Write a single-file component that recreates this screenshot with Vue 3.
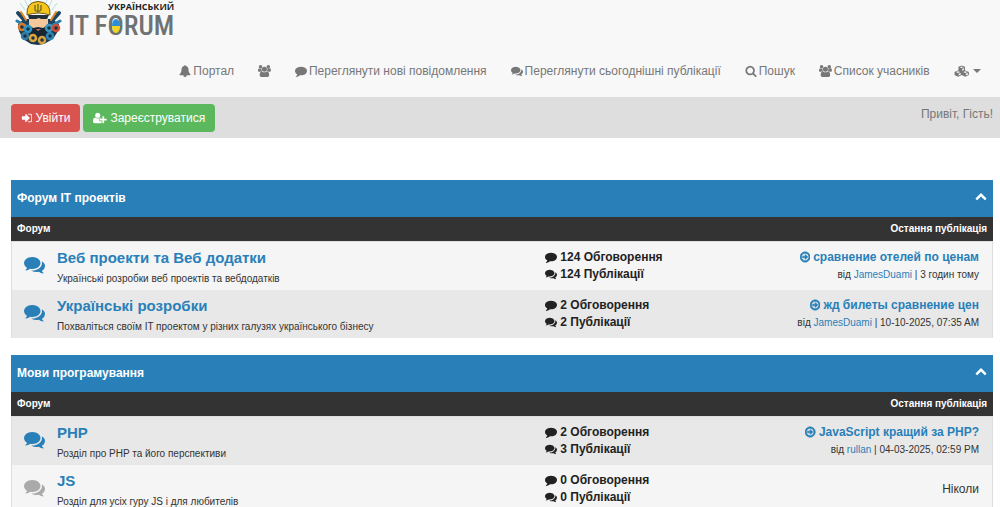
<template>
  <div class="forum-page">
    <header class="navbar">
      <a class="brand" href="#">
        <svg class="emblem" viewBox="0 0 48 46" aria-hidden="true">
          <g stroke="#b5e0dc" stroke-width="1">
            <path d="M11 10L6 3M14 7L11 0M35 7L38 0M38 10L43 3M18 4L16 0M31 4L33 0" />
          </g>
          <path d="M4 24L10 19H38L45 24L44 31L39 39L30 44L24 45L17 44L9 39L5 31Z" fill="#1b3a52" />
          <g stroke="#1d4562" stroke-width="4" stroke-linecap="round">
            <path d="M13 23L4 13M36 23L45 13" />
            <path d="M12 26L3 21M37 26L46 21" stroke="#2a7fa9" stroke-width="3" />
            <path d="M12 20L7 12M37 20L42 12" stroke="#e08a2a" stroke-width="2" />
          </g>
          <path d="M15 16h19v11q-2 4-5 3l-5-2-5 2q-3 0-4-4z" fill="#f5c79c" />
          <path d="M14 15h21l-2 4h-6l-2-1-3 1h-7z" fill="#22303a" />
          <path d="M15 25l4 3 5-1 5 1 5-3v8l-9 6-10-6z" fill="#172633" />
          <path d="M22 29h5l-3 2z" fill="#cf705a" />
          <path d="M13 15Q12 2 24 1.500Q37 2 36 15Q24 11 13 15Z" fill="#f6c51c" stroke="#6b5b1c" stroke-width="1" />
          <path d="M21 5v5q3 3 6 0V5M24 4v9" fill="none" stroke="#7b7420" stroke-width="1.500" />
          <g fill="#173247" stroke-width="2.500">
            <circle cx="8" cy="27" r="3" stroke="#d9792e" />
            <circle cx="14" cy="29" r="3" stroke="#2b96c5" />
            <circle cx="11" cy="36" r="3" stroke="#347b9d" />
            <circle cx="19" cy="38" r="3" stroke="#dba63a" />
            <circle cx="28" cy="40" r="3" stroke="#d7a13d" />
            <circle cx="36" cy="36" r="3" stroke="#2b86b5" />
            <circle cx="35" cy="28" r="3" stroke="#3b96bb" />
            <circle cx="42" cy="28" r="3" stroke="#cb4f39" />
          </g>
        </svg>
        <span class="wordmark">
          <span class="wordmark-top">УКРАЇНСЬКИЙ</span>
          <span class="wordmark-main">IT F<span class="flag-letter">O</span>RUM</span>
        </span>
      </a>

      <nav class="nav-links">
        <a v-for="link in navLinks" :key="link.id" class="nav-link" href="#" :aria-label="link.id">
          <FaIcon :name="link.icon" />
          <span v-if="link.text">{{ link.text }}</span>
        </a>
        <button class="nav-link" type="button" aria-label="more">
          <FaIcon name="cubes" />
          <span class="caret"></span>
        </button>
      </nav>
    </header>

    <!-- User panel -->
    <div class="user-panel">
      <div class="user-actions">
        <button class="btn btn-danger" type="button"><FaIcon name="signIn" /> Увійти</button>
        <button class="btn btn-success" type="button"><FaIcon name="userPlus" /> Зареєструватися</button>
      </div>
      <span class="greeting">Привіт, Гість!</span>
    </div>

    <main class="content">
      <section v-for="(category, c) in categories" :key="category.title" class="category">
        <div class="category-head">
          <a href="#">{{ category.title }}</a>
          <button class="collapse-button" type="button" aria-label="toggle" @click="category.open = !category.open">
            <FaIcon name="chevronUp" />
          </button>
        </div>
        <table v-show="category.open" class="forum-table">
          <colgroup>
            <col class="col-status">
            <col>
            <col class="col-stats">
            <col class="col-last">
          </colgroup>
          <thead>
            <tr>
              <th colspan="3">Форум</th>
              <th class="last-head">Остання публікація</th>
            </tr>
          </thead>
          <tbody>
            <tr v-for="(forum, f) in category.forums" :key="forum.name" :class="{ alt: (c + f) % 2 === 1 }">
              <td class="status" :class="{ read: !forum.last }">
                <FaIcon name="comments" />
              </td>
              <td class="info">
                <a class="forum-name" href="#">{{ forum.name }}</a>
                <div class="forum-text">{{ forum.text }}</div>
              </td>
              <td class="stats">
                <div><FaIcon name="comment" /> {{ forum.threads }} Обговорення</div>
                <div><FaIcon name="comments" /> {{ forum.posts }} Публікації</div>
              </td>
              <td v-if="forum.last" class="last">
                <a class="last-title" href="#"><FaIcon name="arrowRight" /> {{ forum.last.title }}</a>
                <div class="last-meta">від <a href="#">{{ forum.last.user }}</a> | {{ forum.last.date }}</div>
              </td>
              <td v-else class="last never">Ніколи</td>
            </tr>
          </tbody>
        </table>
      </section>
    </main>
  </div>
</template>

<script setup>
import { h, ref } from 'vue'

// [width, path, left edge], all on a 1792 unit high grid
const icons = {
  bell: [1792, 'M912 1696q0-16-16-16-59 0-101.5-42.5t-42.5-101.5q0-16-16-16t-16 16q0 73 51.5 124.5t124.5 51.5q16 0 16-16zm816-288q0 52-38 90t-90 38h-448q0 106-75 181t-181 75-181-75-75-181h-448q-52 0-90-38t-38-90q50-42 91-88t85-119.5 74.5-158.5 50-206 19.5-260q0-152 117-282.5t307-158.5q-8-19-8-39 0-40 28-68t68-28 68 28 28 68q0 20-8 39 190 28 307 158.5t117 282.5q0 139 19.5 260t50 206 74.5 158.5 85 119.5 91 88z'],
  users: [1920, 'M529 896q-162 5-265 128h-134q-82 0-138-40.5t-56-118.5q0-353 124-353 6 0 43.5 21t97.5 42.5 119 21.5q67 0 133-23-5 37-5 66 0 159 90 293zm1071 637q0 120-73 189.5t-194 69.5h-874q-121 0-194-69.5t-73-189.5q0-53 3.5-103.5t14-109 26.5-108.5 43-97.5 62-81 85.5-53.5 111.5-20q10 0 43 21.5t73 48 107 48 135 21.5 135-21.5 107-48 73-48 43-21.5q61 0 111.5 20t85.5 53.5 62 81 43 97.5 26.5 108.5 14 109 3.5 103.5zm-1024-1277q0 106-75 181t-181 75-181-75-75-181 75-181 181-75 181 75 75 181zm704 384q0 159-112.5 271.5t-271.5 112.5-271.5-112.5-112.5-271.5 112.5-271.5 271.5-112.5 271.5 112.5 112.5 271.5zm576 225q0 78-56 118.5t-138 40.5h-134q-103-123-265-128 90-134 90-293 0-29-5-66 66 23 133 23 59 0 119-21.5t97.5-42.5 43.5-21q124 0 124 353zm-128-609q0 106-75 181t-181 75-181-75-75-181 75-181 181-75 181 75 75 181z', -64],
  comment: [1792, 'M1792 896q0 174-120 321.5t-326 233-450 85.5q-70 0-145-8-198 175-460 242-49 14-114 22h-5q-15 0-27-10.5t-16-27.5v-1q-3-4-.5-12t2-10 4.5-9.5l6-9 7-8.5 8-9q7-8 31-34.5t34.5-38 31-39.5 32.5-51 27-59 26-76q-157-89-247.5-220t-90.5-281q0-174 120-321.5t326-233 450-85.5 450 85.5 326 233 120 321.5z'],
  comments: [1792, 'M1408 768q0 139-94 257t-256.5 186.5-353.5 68.5q-86 0-176-16-124 88-278 128-36 9-86 16h-3q-11 0-20.5-8t-11.5-21q-1-3-1-6.5t.5-6.5 2-6l2.5-5 3.5-5.5 4-5 4.5-5 4-4.5q5-6 23-25t26-29.5 22.5-29 25-38.5 20.5-44q-124-72-195-177t-71-224q0-139 94-257t256.5-186.5 353.5-68.5 353.5 68.5 256.5 186.5 94 257zm384 256q0 120-71 224.5t-195 176.5q10 24 20.5 44t25 38.5 22.5 29 26 29.5 23 25q1 1 4 4.5t4.5 5 4 5 3.5 5.5l2.5 5 2 6 .5 6.5-1 6.5q-3 14-13 22t-22 7q-50-7-86-16-154-40-278-128-90 16-176 16-271 0-472-132 58 4 88 4 161 0 309-45t264-129q125-92 192-212t67-254q0-77-23-152 129 71 204 178t75 230z'],
  search: [1792, 'M1216 832q0-185-131.5-316.5t-316.5-131.5-316.5 131.5-131.5 316.5 131.5 316.5 316.5 131.5 316.5-131.5 131.5-316.5zm512 832q0 52-38 90t-90 38q-54 0-90-38l-343-342q-179 124-399 124-143 0-273.5-55.5t-225-150-150-225-55.5-273.5 55.5-273.5 150-225 225-150 273.5-55.5 273.5 55.5 225 150 150 225 55.5 273.5q0 220-124 399l343 343q37 37 37 90z'],
  signIn: [1664, 'M1312 896q0 26-19 45l-544 544q-19 19-45 19t-45-19-19-45v-288h-448q-26 0-45-19t-19-45v-384q0-26 19-45t45-19h448v-288q0-26 19-45t45-19 45 19l544 544q19 19 19 45zm352-352v704q0 119-84.5 203.5t-203.5 84.5h-320q-13 0-22.5-9.5t-9.5-22.5q0-4-1-20t-.5-26.5 3-23.5 10-19.5 20.5-6.5h320q66 0 113-47t47-113v-704q0-66-47-113t-113-47h-312l-11.5-1-11.5-3-8-5.5-7-9-2-13.5q0-4-1-20t-.5-26.5 3-23.5 10-19.5 20.5-6.5h320q119 0 203.5 84.5t84.5 203.5z'],
  userPlus: [2048, 'M704 896q-159 0-271.5-112.5t-112.5-271.5 112.5-271.5 271.5-112.5 271.5 112.5 112.5 271.5-112.5 271.5-271.5 112.5zm960 128h352q13 0 22.5 9.5t9.5 22.5v192q0 13-9.5 22.5t-22.5 9.5h-352v352q0 13-9.5 22.5t-22.5 9.5h-192q-13 0-22.5-9.5t-9.5-22.5v-352h-352q-13 0-22.5-9.5t-9.5-22.5v-192q0-13 9.5-22.5t22.5-9.5h352v-352q0-13 9.5-22.5t22.5-9.5h192q13 0 22.5 9.5t9.5 22.5v352zm-736 224q0 52 38 90t90 38h256v238q-68 50-171 50h-874q-121 0-194-69t-73-190q0-53 3.5-103.5t14-109 26.5-108.5 43-97.5 62-81 85.5-53.5 111.5-20q19 0 39 17 79 61 154.5 91.5t164.5 30.5 164.5-30.5 154.5-91.5q20-17 39-17 132 0 217 96h-223q-52 0-90 38t-38 90v192z'],
  arrowRight: [1536, 'M1280 896q0 14-9 23l-320 320q-9 9-23 9-13 0-22.5-9.5t-9.5-22.5v-192h-352q-13 0-22.5-9.5t-9.5-22.5v-192q0-13 9.5-22.5t22.5-9.5h352v-192q0-14 9-23t23-9q12 0 24 10l319 319q9 9 9 23zm160 0q0-148-73-273t-198-198-273-73-273 73-198 198-73 273 73 273 198 198 273 73 273-73 198-198 73-273zm224 0q0 209-103 385.5t-279.5 279.5-385.5 103-385.5-103-279.5-279.5-103-385.5 103-385.5 279.5-279.5 385.5-103 385.5 103 279.5 279.5 103 385.5z', 128],
  chevronUp: [1792, 'M1683 1331l-166 165q-19 19-45 19t-45-19l-531-531-531 531q-19 19-45 19t-45-19l-166-165q-19-19-19-45.5t19-45.5l742-741q19-19 45-19t45 19l742 741q19 19 19 45.5t-19 45.5z'],
  cubes: [2304, 'M1152 60L1640 260V800L2220 1050V1510L1690 1770L1152 1510L614 1770L84 1510V1050L664 800V260ZM1152 210L850 335L1152 460L1454 335ZM1220 590V845L1500 725V470ZM614 920L300 1055L614 1190L928 1055ZM1690 920L1376 1055L1690 1190L2004 1055ZM690 1320V1580L1010 1420V1180ZM1766 1320V1580L2086 1420V1180Z']
}

const FaIcon = ({ name }) => {
  const [width, d, x = 0] = icons[name]
  return h('svg', { class: 'fa', viewBox: `${x} 0 ${width} 1792`, 'aria-hidden': 'true' }, [
    h('path', { d, fill: 'currentColor', 'fill-rule': name === 'cubes' ? 'evenodd' : 'nonzero' })
  ])
}
FaIcon.props = ['name']

const navLinks = [
  { id: 'portal', icon: 'bell', text: 'Портал' },
  { id: 'team', icon: 'users' },
  { id: 'new', icon: 'comment', text: 'Переглянути нові повідомлення' },
  { id: 'today', icon: 'comments', text: 'Переглянути сьогоднішні публікації' },
  { id: 'search', icon: 'search', text: 'Пошук' },
  { id: 'members', icon: 'users', text: 'Список учасників' }
]

const categories = ref([
  {
    title: 'Форум IT проектів',
    open: true,
    forums: [
      {
        name: 'Веб проекти та Веб додатки',
        text: 'Українські розробки веб проектів та вебдодатків',
        threads: 124,
        posts: 124,
        last: { title: 'сравнение отелей по ценам', user: 'JamesDuami', date: '3 годин тому' }
      },
      {
        name: 'Українські розробки',
        text: 'Похваліться своїм IT проектом у різних галузях українського бізнесу',
        threads: 2,
        posts: 2,
        last: { title: 'жд билеты сравнение цен', user: 'JamesDuami', date: '10-10-2025, 07:35 AM' }
      }
    ]
  },
  {
    title: 'Мови програмування',
    open: true,
    forums: [
      {
        name: 'PHP',
        text: 'Розділ про PHP та його перспективи',
        threads: 2,
        posts: 3,
        last: { title: 'JavaScript кращий за PHP?', user: 'rullan', date: '04-03-2025, 02:59 PM' }
      },
      {
        name: 'JS',
        text: 'Розділ для усіх гуру JS і для любителів',
        threads: 0,
        posts: 0,
        last: null
      }
    ]
  }
])
</script>

<style>
body {
  margin: 0;
  background: #fff;
}
</style>

<style scoped>
.forum-page {
  font-family: "Liberation Sans", Arial, sans-serif;
  font-size: 12px;
  line-height: 16px;
  color: #333;
}

a {
  color: #2980b9;
  text-decoration: none;
}

button {
  font: inherit;
  border: 0;
  cursor: pointer;
}

.fa {
  height: 12px;
  vertical-align: -2px;
}

/* Top bar */
.navbar {
  background: #f8f8f8;
  padding-bottom: 17px;
}

.brand {
  display: flex;
  gap: 6px;
  padding-left: 14px;
}

.emblem {
  width: 48px;
  height: 46px;
}

.wordmark {
  display: flex;
  flex-direction: column;
  padding-top: 1px;
}

.wordmark-top {
  align-self: flex-end;
  font-family: "Open Sans", sans-serif;
  font-size: 9px;
  line-height: 11px;
  font-weight: bold;
  color: #222;
}

.wordmark-main {
  font-family: "Roboto Condensed", Roboto, sans-serif;
  font-size: 27px;
  line-height: 28px;
  font-weight: 500;
  color: #6f7273;
}

.flag-letter {
  position: relative;
}

/* Flag colours inside the ring of the letter */
.flag-letter::after {
  content: "";
  position: absolute;
  inset: 9px 4px;
  border-radius: 50%;
  background: linear-gradient(#2b8fd8 50%, #f4d51f 50%);
}

.nav-links {
  display: flex;
  flex-wrap: wrap;
  justify-content: flex-end;
  padding: 16px 7px 0;
}

.nav-link {
  display: flex;
  align-items: center;
  gap: 2px;
  padding: 0 12px;
  line-height: 18px;
  color: #777;
  background: none;
}

.caret {
  margin-left: 2px;
  border-top: 4px solid;
  border-left: 4px solid transparent;
  border-right: 4px solid transparent;
}

/* User panel */
.user-panel {
  display: flex;
  justify-content: space-between;
  padding: 7px 7px 6px 11px;
  background: #dedede;
}

.user-actions {
  display: flex;
  gap: 3px;
}

.btn {
  padding: 6px 10px;
  border-radius: 4px;
  color: #fff;
}

.btn-danger {
  background: #d9534f;
}

.btn-success {
  background: #5cb85c;
}

.greeting {
  padding-top: 2px;
  color: #777;
}

/* Forum list */
.content {
  padding: 42px 7px 0 11px;
}

.category {
  margin-bottom: 17px;
}

.category-head {
  display: flex;
  justify-content: space-between;
  align-items: center;
  padding: 0 6px;
  line-height: 37px;
  font-weight: bold;
  background: #2980b9;
}

.category-head a {
  color: #fff;
}

.collapse-button {
  display: flex;
  padding: 0 0 6px;
  color: #fff;
  background: none;
}

.forum-table {
  width: 100%;
  table-layout: fixed;
  border-spacing: 0;
}

.col-status {
  width: 46px;
}

.col-stats {
  width: 200px;
}

.col-last {
  width: 248px;
}

th {
  padding: 4px 6px;
  font-size: 10px;
  text-align: left;
  color: #fff;
  background: #333;
  border-bottom: 1px solid #ddd;
}

.last-head {
  text-align: right;
}

tbody tr {
  background: #f5f5f5;
}

tbody tr.alt {
  background: #e8e8e8;
}

td {
  padding: 7px 0 3px;
  vertical-align: top;
}

.status {
  padding: 3px 0 7px;
  border-left: 1px solid #ddd;
  vertical-align: middle;
  color: #2980b9;
}

.status .fa {
  display: block;
  height: 21px;
  margin: 0 auto;
}

.status.read {
  color: #aaa;
}

.forum-name {
  display: block;
  font-size: 15px;
  line-height: 18px;
  font-weight: bold;
}

.forum-text {
  padding-top: 4px;
  font-size: 10px;
}

.stats {
  line-height: 17px;
  font-weight: bold;
  color: #222;
}

.last {
  padding-right: 13px;
  border-right: 1px solid #ddd;
  line-height: 17px;
  text-align: right;
}

.last-title {
  display: block;
  font-weight: bold;
}

.last-title .fa {
  stroke: currentColor;
  stroke-width: 90;
}

.last-meta {
  font-size: 10px;
}

.never {
  padding-bottom: 7px;
  vertical-align: middle;
}
</style>
